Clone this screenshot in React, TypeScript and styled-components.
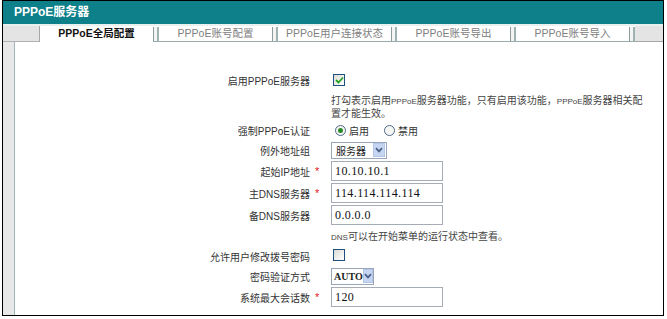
import { Fragment } from "react";
import styled, { createGlobalStyle } from "styled-components";

const Global = createGlobalStyle`
  body {
    margin: 0;
    background: #fff;
    font-family: "Liberation Sans", "Noto Sans CJK SC", sans-serif;
    font-size: 10px;
    color: #333;
  }
`;

const Frame = styled.div`
  box-sizing: border-box;
  width: 662px;
  height: 316px;
  margin-left: 2px;
  border: 1px solid #000;
  display: flex;
  flex-direction: column;
  overflow: hidden;
`;

const TitleBar = styled.div`
  height: 23px;
  background: #0d8089;
  color: #fff;
  font-weight: bold;
  font-size: 12px;
  line-height: 23px;
  padding-left: 11px;
  border-bottom: 2px solid #e8f0f0;
`;

const TabRow = styled.div`
  display: flex;
  height: 16px;
  background: #fff;
`;

const Corner = styled.div`
  width: 36px;
  background: #e4e4e4;
  border-right: 1px solid #a6a6a6;
  border-bottom: 1px solid #b0b0b0;
`;

const Tab = styled.div<{ $active?: boolean }>`
  box-sizing: border-box;
  width: 113px;
  text-align: center;
  line-height: 15px;
  font-size: 10.5px;
  font-weight: ${(p) => (p.$active ? "bold" : "normal")};
  color: ${(p) => (p.$active ? "#111" : "#808080")};
  border-bottom: ${(p) => (p.$active ? "1px solid #fff" : "1px solid #9aabab")};
  background: #fff;
  white-space: nowrap;
`;

const Sep = styled.div`
  box-sizing: border-box;
  width: 6px;
  margin-top: 1px;
  border-left: 1px solid #8a9c9c;
  border-right: 2px solid #9fb2b2;
  background: #f4f4f4;
  border-bottom: 1px solid #9aabab;
`;

const Filler = styled.div`
  flex: 1;
  background: #e4e4e4;
  border-bottom: 1px solid #a6a6a6;
`;

const Body = styled.div`
  flex: 1;
  display: flex;
`;

const Strip = styled.div`
  width: 11px;
  background: #e8e8e8;
  border-right: 1px solid #9fb6b8;
`;

const Content = styled.div`
  flex: 1;
  background: #fff;
  padding-top: 28px;
  display: flex;
  flex-direction: column;
`;

const Row = styled.div<{ $h: number }>`
  display: grid;
  grid-template-columns: 295px 21px 1fr;
  align-items: center;
  height: ${(p) => p.$h}px;
`;

const Label = styled.div`
  text-align: right;
  color: #333;
  white-space: nowrap;
`;

const Star = styled.div`
  color: #e02020;
  font-size: 11px;
  padding-left: 5px;
`;

const Note = styled.div<{ $top?: number }>`
  color: #444;
  line-height: 13px;
  padding-top: ${(p) => p.$top ?? 0}px;
  padding-right: 20px;
  align-self: start;
`;

const Small = styled.span`
  display: inline-block;
  font-size: 8px;
  line-height: 10px;
`;

const Check = styled.span`
  box-sizing: border-box;
  display: inline-flex;
  align-items: center;
  justify-content: center;
  width: 12px;
  height: 12px;
  margin-left: 2px;
  border: 1px solid #1e4f7e;
  background: linear-gradient(135deg, #dcdcd6, #fff);
`;

const Radios = styled.div`
  display: flex;
  align-items: center;
  gap: 3px;
`;

const Radio = styled.span<{ $on?: boolean }>`
  box-sizing: border-box;
  width: 11px;
  height: 11px;
  margin-left: 4px;
  border-radius: 50%;
  border: 1px solid #4e6a8a;
  background: #f6f6f2;
  display: inline-flex;
  align-items: center;
  justify-content: center;
  &::after {
    content: "";
    width: 5px;
    height: 5px;
    border-radius: 50%;
    background: ${(p) => (p.$on ? "#2a8a2a" : "transparent")};
  }
`;

const RadioText = styled.span`
  margin-right: 8px;
  color: #333;
`;

const Select = styled.div<{ $w: number; $serif?: boolean }>`
  box-sizing: border-box;
  width: ${(p) => p.$w}px;
  height: 17px;
  border: 1px solid #98a6b8;
  display: flex;
  align-items: center;
  justify-content: space-between;
  padding-left: ${(p) => (p.$serif ? 2 : 4)}px;
  font-family: ${(p) => (p.$serif ? '"Liberation Serif", serif' : "inherit")};
  font-weight: ${(p) => (p.$serif ? "bold" : "normal")};
  font-size: 10px;
  color: #222;
`;

const Arrow = styled.span`
  width: 12px;
  height: 14px;
  margin-right: 1px;
  background: #c5d5f2;
  border: 1px solid #b3c6ea;
  box-sizing: border-box;
  display: flex;
  align-items: center;
  justify-content: center;
`;

const Input = styled.div`
  box-sizing: border-box;
  width: 112px;
  height: 20px;
  border: 1px solid #a5acb5;
  padding-left: 3px;
  font-family: "Liberation Serif", serif;
  font-size: 12px;
  letter-spacing: 0.4px;
  line-height: 18px;
  color: #111;
`;

const Chevron = () => (
  <svg width="8" height="6" viewBox="0 0 8 6">
    <path d="M1 1.2 L4 4.4 L7 1.2" fill="none" stroke="#4a5f86" strokeWidth="1.7" />
  </svg>
);

const Tick = () => (
  <svg width="9" height="8" viewBox="0 0 9 8">
    <path d="M1 4 L3.5 6.5 L8 1.5" fill="none" stroke="#21a121" strokeWidth="1.8" />
  </svg>
);

const tabs = ["PPPoE全局配置", "PPPoE账号配置", "PPPoE用户连接状态", "PPPoE账号导出", "PPPoE账号导入"];

export default function App() {
  return (
    <>
      <Global />
      <Frame>
        <TitleBar>PPPoE服务器</TitleBar>
        <TabRow>
          <Corner />
          {tabs.map((t, i) => (
            <Fragment key={t}>
              <Tab $active={i === 0}>{t}</Tab>
              <Sep />
            </Fragment>
          ))}
          <Filler />
        </TabRow>
        <Body>
          <Strip />
          <Content>
            <Row $h={20}>
              <Label>启用PPPoE服务器</Label>
              <Star />
              <div><Check><Tick /></Check></div>
            </Row>
            <Row $h={30}>
              <Label />
              <Star />
              <Note $top={4}>
                打勾表示启用<Small>PPPoE</Small>服务器功能，只有启用该功能，<Small>PPPoE</Small>服务器相关配置才能生效。
              </Note>
            </Row>
            <Row $h={20}>
              <Label>强制PPPoE认证</Label>
              <Star />
              <Radios>
                <Radio $on />
                <RadioText>启用</RadioText>
                <Radio />
                <RadioText>禁用</RadioText>
              </Radios>
            </Row>
            <Row $h={20}>
              <Label>例外地址组</Label>
              <Star />
              <Select $w={56}>服务器<Arrow><Chevron /></Arrow></Select>
            </Row>
            <Row $h={22}>
              <Label>起始IP地址</Label>
              <Star>*</Star>
              <Input>10.10.10.1</Input>
            </Row>
            <Row $h={22}>
              <Label>主DNS服务器</Label>
              <Star>*</Star>
              <Input>114.114.114.114</Input>
            </Row>
            <Row $h={22}>
              <Label>备DNS服务器</Label>
              <Star />
              <Input>0.0.0.0</Input>
            </Row>
            <Row $h={20}>
              <Label />
              <Star />
              <Note $top={4}><Small>DNS</Small>可以在开始菜单的运行状态中查看。</Note>
            </Row>
            <Row $h={20}>
              <Label>允许用户修改拨号密码</Label>
              <Star />
              <div><Check /></div>
            </Row>
            <Row $h={20}>
              <Label>密码验证方式</Label>
              <Star />
              <Select $w={43} $serif>AUTO<Arrow><Chevron /></Arrow></Select>
            </Row>
            <Row $h={22}>
              <Label>系统最大会话数</Label>
              <Star>*</Star>
              <Input>120</Input>
            </Row>
          </Content>
        </Body>
      </Frame>
    </>
  );
}
